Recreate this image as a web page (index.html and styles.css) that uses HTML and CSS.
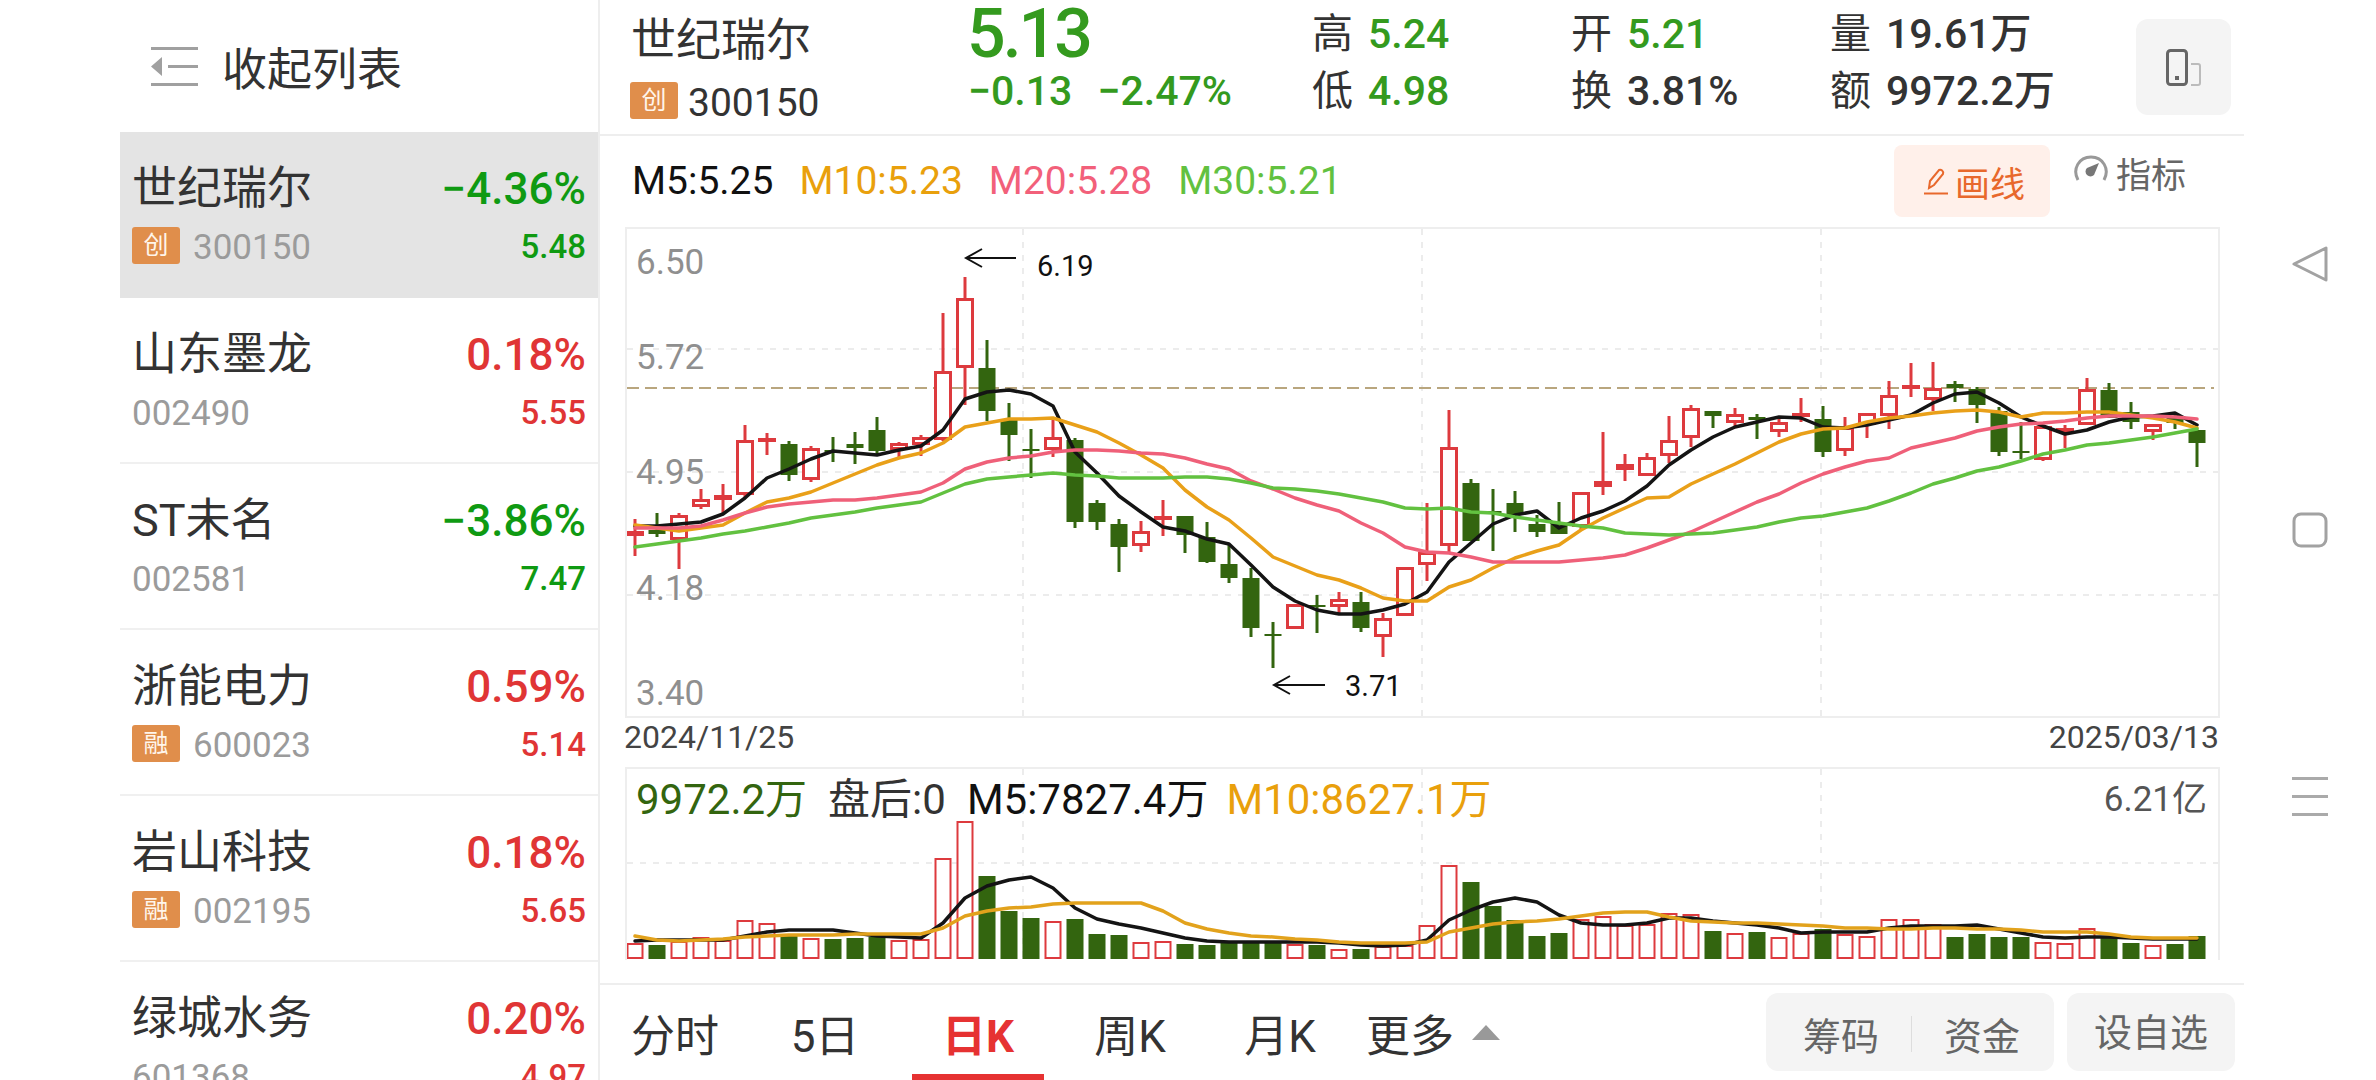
FILE: index.html
```html
<!DOCTYPE html>
<html lang="zh-CN">
<head>
    <meta charset="UTF-8">
    <meta name="viewport" content="width=device-width, initial-scale=1.0">
    <title>世纪瑞尔 日K</title>
    <link rel="stylesheet" href="styles.css">
</head>
<body>
    <div class="app">
        <aside class="sidebar">
            <div class="collapse">
                <svg class="collapse-icon" width="47" height="39" viewBox="0 0 47 39">
                    <path d="M0 0h47v3H0zM17 18h30v3H17zM0 36h47v3H0zM11 10v19L0 19.500z" fill="#a0a0a0"/>
                </svg>
                <span>收起列表</span>
            </div>
            <div class="stock selected">
                <div class="stock-line"><span class="stock-name">世纪瑞尔</span><span class="stock-pct down">−4.36%</span></div>
                <div class="stock-line"><span class="stock-code"><i class="badge">创</i>300150</span><span class="stock-price down">5.48</span></div>
            </div>
            <div class="stock">
                <div class="stock-line"><span class="stock-name">山东墨龙</span><span class="stock-pct up">0.18%</span></div>
                <div class="stock-line"><span class="stock-code">002490</span><span class="stock-price up">5.55</span></div>
            </div>
            <div class="stock">
                <div class="stock-line"><span class="stock-name">ST未名</span><span class="stock-pct down">−3.86%</span></div>
                <div class="stock-line"><span class="stock-code">002581</span><span class="stock-price down">7.47</span></div>
            </div>
            <div class="stock">
                <div class="stock-line"><span class="stock-name">浙能电力</span><span class="stock-pct up">0.59%</span></div>
                <div class="stock-line"><span class="stock-code"><i class="badge">融</i>600023</span><span class="stock-price up">5.14</span></div>
            </div>
            <div class="stock">
                <div class="stock-line"><span class="stock-name">岩山科技</span><span class="stock-pct up">0.18%</span></div>
                <div class="stock-line"><span class="stock-code"><i class="badge">融</i>002195</span><span class="stock-price up">5.65</span></div>
            </div>
            <div class="stock">
                <div class="stock-line"><span class="stock-name">绿城水务</span><span class="stock-pct up">0.20%</span></div>
                <div class="stock-line"><span class="stock-code">601368</span><span class="stock-price up">4.97</span></div>
            </div>
        </aside>

        <main class="main">
            <header class="quote">
                <div class="quote-title">
                    <div class="quote-name">世纪瑞尔</div>
                    <div class="quote-code"><i class="badge">创</i>300150</div>
                </div>
                <div class="quote-price">
                    <div class="price-now">5.13</div>
                    <div class="price-change"><span>−0.13</span><span>−2.47%</span></div>
                </div>
                <div class="stats stats-a">
                    <div class="stat"><b>高</b><span class="green">5.24</span></div>
                    <div class="stat"><b>低</b><span class="green">4.98</span></div>
                </div>
                <div class="stats stats-a">
                    <div class="stat"><b>开</b><span class="green">5.21</span></div>
                    <div class="stat"><b>换</b><span>3.81%</span></div>
                </div>
                <div class="stats stats-b">
                    <div class="stat"><b>量</b><span>19.61万</span></div>
                    <div class="stat"><b>额</b><span>9972.2万</span></div>
                </div>
                <div class="rotate-btn">
                    <svg width="36" height="37" viewBox="0 0 36 37" fill="none">
                        <rect x="1.500" y="1.500" width="19" height="34" rx="3" stroke="#666" stroke-width="3"/>
                        <rect x="9" y="27" width="4" height="4" fill="#666"/>
                        <path d="M25 15h7a2 2 0 0 1 2 2v17a2 2 0 0 1-2 2h-7" stroke="#bbb" stroke-width="2"/>
                    </svg>
                </div>
            </header>

            <div class="tools">
                <span class="ma ma5">M5:5.25</span>
                <span class="ma ma10">M10:5.23</span>
                <span class="ma ma20">M20:5.28</span>
                <span class="ma ma30">M30:5.21</span>
                <div class="draw-btn">
                    <svg width="24" height="27" viewBox="0 0 24 27" fill="none" stroke="#e8682c" stroke-width="2">
                        <path d="M5 20l1-7L15 2c2-1 5 1 4 4L10 17z"/>
                        <path d="M0 25.500h24"/>
                    </svg>
                    <span>画线</span>
                </div>
                <div class="indicator-btn">
                    <svg width="36" height="26" viewBox="0 0 36 26" fill="none">
                        <path d="M5 25C-1 14 6 2 18 2s19 12 13 23" stroke="#999" stroke-width="3"/>
                        <path d="M14 13l12-5-5 12a4 4 0 0 1-7-7z" fill="#777"/>
                    </svg>
                    <span>指标</span>
                </div>
            </div>

            <div class="kline">
                <svg class="kline-svg" id="klineSvg" viewBox="627 229 1591 487">
                    <g id="klineGrid"></g>
                    <path class="last-line" d="M627 388H2214"/>
                    <g id="klineBars"></g>
                    <g id="klineLines"></g>
                    <text class="axis" x="636" y="274">6.50</text>
                    <text class="axis" x="636" y="369">5.72</text>
                    <text class="axis" x="636" y="484">4.95</text>
                    <text class="axis" x="636" y="600">4.18</text>
                    <text class="axis" x="636" y="705">3.40</text>
                    <path class="arrow" d="M1016 258H966M982 249l-16 9 16 9"/>
                    <text class="mark" x="1037" y="276">6.19</text>
                    <path class="arrow" d="M1325 685H1274M1290 676l-16 9 16 9"/>
                    <text class="mark" x="1345" y="696">3.71</text>
                </svg>
            </div>
            <div class="dates"><span>2024/11/25</span><span>2025/03/13</span></div>

            <div class="volume">
                <svg class="volume-svg" id="volumeSvg" viewBox="627 769 1591 191">
                    <g id="volumeGrid"></g>
                    <g id="volumeBars"></g>
                    <g id="volumeLines"></g>
                </svg>
                <div class="volume-legend">
                    <span class="green-dark">9972.2万</span>
                    <span class="text-dark">盘后:0</span>
                    <span class="text-black">M5:7827.4万</span>
                    <span class="text-orange">M10:8627.1万</span>
                    <span class="volume-max">6.21亿</span>
                </div>
            </div>

            <nav class="tabs">
                <div class="tab-list">
                    <div class="tab">分时</div>
                    <div class="tab">5日</div>
                    <div class="tab active">日K</div>
                    <div class="tab">周K</div>
                    <div class="tab">月K</div>
                    <div class="tab">更多</div>
                    <div class="tab"><span class="more-arrow"></span></div>
                </div>
                <div class="action-group">
                    <span>筹码</span><i class="action-sep"></i><span>资金</span>
                </div>
                <div class="action-btn">设自选</div>
            </nav>
        </main>

        <div class="sys-nav">
            <svg width="36" height="36" viewBox="0 0 36 36" fill="none" stroke="#a2a2a2" stroke-width="3" stroke-linejoin="round">
                <path d="M34 2v32L2 18z"/>
            </svg>
            <svg width="36" height="36" viewBox="0 0 36 36" fill="none" stroke="#a2a2a2" stroke-width="3">
                <rect x="2" y="2" width="32" height="32" rx="7"/>
            </svg>
            <div class="sys-menu"><i></i><i></i><i></i></div>
        </div>
    </div>
    <script src="chart.js"></script>
</body>
</html>
```

FILE: styles.css
```css
* { box-sizing: border-box; }
html, body { margin: 0; padding: 0; background: #fff; }
body { font-family: Roboto, "Noto Sans CJK SC", sans-serif; color: #333; }
i { font-style: normal; }
b { font-weight: 400; }

.app { display: flex; width: 2376px; height: 1080px; overflow: hidden; }

/* left list */
.sidebar { width: 480px; margin-left: 120px; height: 1080px; overflow: hidden; border-right: 2px solid #eee; flex: none; }
.collapse { height: 132px; display: flex; align-items: center; padding-left: 31px; font-size: 45px; color: #333; }
.collapse-icon { margin-right: 24px; }
.stock { height: 166px; padding: 33px 12px 0 12px; border-bottom: 2px solid #f0f0f0; }
.stock.selected { background: #e4e4e4; border-bottom: 0; }
.stock-line { display: flex; justify-content: space-between; align-items: center; }
.stock-line + .stock-line { margin-top: 14px; height: 37px; }
.stock-name { font-size: 45px; line-height: 48px; }
.stock-pct { font-size: 44px; line-height: 48px; font-weight: 500; }
.stock-code { display: flex; align-items: flex-start; height: 37px; font-size: 35px; line-height: 41px; color: #9b9b9b; }
.stock-price { font-size: 33px; line-height: 37px; padding-top: 2px; font-weight: 500; }
.up { color: #e03535; }
.down { color: #0f9a12; }

.badge { display: inline-flex; align-items: center; justify-content: center; width: 48px; height: 37px; margin-right: 13px; background: #e08e4b; border-radius: 3px; color: #fff5ea; font-size: 25px; line-height: 37px; }

/* main column */
.main { width: 1644px; flex: none; }
.quote { display: flex; height: 136px; padding-left: 30px; border-bottom: 2px solid #eee; }
.quote-title { width: 338px; padding-top: 19px; }
.quote-name { font-size: 45px; line-height: 44px; padding-left: 1px; }
.quote-code { display: flex; align-items: flex-start; height: 37px; margin-top: 19px; font-size: 39px; line-height: 42px; }
.quote-code .badge { margin-right: 10px; }
.quote-price { width: 344px; color: #349a1e; }
.price-now { font-size: 68px; line-height: 68px; font-weight: 500; letter-spacing: -3px; margin-left: -1px; }
.price-change { display: flex; gap: 25px; font-size: 41px; line-height: 42px; margin-top: 2px; font-weight: 500; }
.stats { padding-top: 6px; }
.stats-a { width: 259px; }
.stats-b { width: 306px; }
.stat { display: flex; font-size: 41px; line-height: 56px; height: 57px; }
.stat b { margin-right: 15px; }
.stat span { font-weight: 500; }
.green { color: #349a1e; }
.rotate-btn { width: 95px; height: 96px; margin-top: 19px; background: #f4f4f4; border-radius: 12px; padding: 30px 0 0 30px; }

.tools { display: flex; height: 91px; padding: 0 58px 0 32px; }
.ma { font-size: 39px; line-height: 91px; margin-right: 26px; }
.ma5 { color: #111; }
.ma10 { color: #e9a00c; }
.ma20 { color: #f2607a; }
.ma30 { color: #62c140; }
.draw-btn { display: flex; align-items: center; width: 156px; height: 72px; margin: 9px 23px 0 auto; padding-left: 30px; background: #fff0ea; border-radius: 8px; color: #e8682c; font-size: 35px; }
.draw-btn span { margin-left: 7px; }
.indicator-btn { display: flex; align-items: center; height: 36px; margin-top: 18px; color: #666; font-size: 35px; }
.indicator-btn svg { margin: -8px 7px 0 0; }

.kline { width: 1595px; height: 491px; margin-left: 25px; border: 2px solid #eee; }
.kline-svg { display: block; width: 1591px; height: 487px; }
.axis { font-size: 35px; fill: #8f8f8f; }
.mark { font-size: 29px; fill: #111; }
.arrow { fill: none; stroke: #111; stroke-width: 2; }
.last-line { fill: none; stroke: #b9a67e; stroke-width: 2; stroke-dasharray: 12 6; }

.dates { display: flex; justify-content: space-between; width: 1595px; height: 49px; margin-left: 24px; font-size: 32px; line-height: 39px; color: #444; }

.volume { position: relative; width: 1595px; height: 193px; margin-left: 25px; border: 2px solid #eee; border-bottom: 0; }
.volume-svg { display: block; width: 1591px; height: 191px; }
.volume-legend { position: absolute; left: 0; right: 0; top: 0; display: flex; gap: 21px; padding: 0 11px 0 9px; font-size: 42px; line-height: 62px; }
.green-dark { color: #33650f; }
.text-dark { color: #333; }
.text-black { color: #111; }
.text-orange { margin-left: -3px; color: #e9a00c; }
.volume-max { margin-left: auto; font-size: 35px; color: #555; }

.tabs { display: flex; height: 97px; margin-top: 23px; padding-right: 9px; border-top: 2px solid #eee; }
.tab-list { display: grid; grid-template-columns: 150px 150px 156px 148px 152px 108px 44px; height: 95px; }
.tab { display: flex; align-items: center; justify-content: center; font-size: 44px; color: #333; }
.tab.active { margin: 0 12px; font-weight: 700; color: #e63232; box-shadow: inset 0 -6px 0 #e63232; }
.more-arrow { width: 0; height: 0; border-left: 14px solid transparent; border-right: 14px solid transparent; border-bottom: 15px solid #999; }
.action-group { display: flex; align-items: center; gap: 32px; width: 288px; height: 78px; margin: 8px 0 0 auto; padding: 3px 0 0 37px; background: #f4f4f4; border-radius: 12px; font-size: 38px; color: #666; }
.action-sep { width: 1px; height: 36px; background: #ddd; }
.action-btn { width: 168px; height: 78px; margin: 8px 0 0 13px; background: #f4f4f4; border-radius: 12px; font-size: 38px; line-height: 81px; text-align: center; color: #666; }

/* android nav bar on the right */
.sys-nav { flex: 1; display: flex; flex-direction: column; align-items: center; justify-content: space-between; padding: 246px 0 264px; }
.sys-menu { display: flex; flex-direction: column; gap: 15px; width: 36px; }
.sys-menu i { display: block; height: 3px; background: #aaa; }
```

FILE: chart.js
```js
// all y values below are page pixels, read off the screenshot
const firstX = 635;
const stepX = 22;
const RED = '#dd3a3e';
const GREEN = '#33650f';

// [colour, body top, body bottom, wick top, wick bottom]
const candles = [
    ['r',531,536,519,556], ['g',530,534,513,537], ['r',515,540,513,569], ['r',499,507,489,509],
    ['r',495,500,484,515], ['r',440,495,425,497], ['r',438,442,433,455], ['g',444,475,441,481],
    ['r',448,480,446,482], ['g',450,452,437,462], ['g',444,448,432,464], ['g',430,451,417,455],
    ['r',443,450,442,457], ['r',437,445,435,456], ['r',371,440,313,441], ['r',298,368,277,405],
    ['g',368,411,340,421], ['g',419,435,403,461], ['g',449,451,429,478], ['r',437,450,417,457],
    ['g',440,522,438,528], ['g',503,522,500,530], ['g',524,547,519,572], ['r',531,546,521,552],
    ['r',516,520,500,536], ['g',516,535,516,553], ['g',537,562,522,563], ['g',564,578,545,583],
    ['g',578,628,568,637], ['g',634,636,622,668], ['r',604,629,604,629], ['g',605,607,595,633],
    ['r',599,607,592,613], ['g',602,628,592,632], ['r',618,637,613,657], ['r',567,616,567,616],
    ['r',552,565,503,581], ['r',447,546,410,552], ['g',483,541,479,541], ['g',511,513,489,551],
    ['g',503,515,491,532], ['g',524,532,515,537], ['g',523,534,502,534], ['r',492,527,492,529],
    ['r',481,487,432,495], ['r',464,470,454,481], ['r',457,476,453,476], ['r',440,456,416,463],
    ['r',408,438,405,447], ['g',411,416,411,428], ['r',414,423,408,426], ['g',417,420,414,439],
    ['r',422,432,417,437], ['r',413,417,398,422], ['g',419,452,406,457], ['r',427,451,417,456],
    ['r',413,425,413,438], ['r',395,416,381,429], ['r',385,389,363,397], ['r',388,400,362,411],
    ['g',384,388,381,402], ['g',389,405,387,423], ['g',411,452,407,456], ['g',451,453,422,459],
    ['r',426,460,426,461], ['r',428,432,425,448], ['r',389,425,378,425], ['g',390,418,383,418],
    ['g',412,422,402,429], ['r',424,432,424,440], ['g',417,423,415,429], ['g',430,443,430,467]
];

const ma5 = [526,526,524,522,514,498,478,469,459,451,453,455,450,446,430,399,392,390,394,406,
    452,473,496,512,527,531,539,544,565,587,601,610,614,614,610,604,592,562,543,524,515,511,528,518,
    511,501,486,465,450,437,427,422,417,418,427,428,425,420,415,403,394,392,403,417,426,434,430,422,417,416,413,425];
const ma10 = [525,528,531,528,525,513,502,498,492,483,474,465,458,453,443,427,423,419,419,418,
    425,432,443,455,468,490,507,520,538,557,566,575,580,588,598,601,601,587,580,568,558,551,545,530,
    518,508,498,497,484,474,464,453,442,434,429,428,422,418,416,413,411,410,412,417,413,413,412,412,415,418,422,428];
const ma20 = [528,528,528,526,520,513,507,504,502,500,500,498,495,492,483,469,462,458,456,452,
    450,450,451,453,454,458,464,469,481,489,498,505,511,523,533,547,552,553,557,562,562,562,562,560,
    558,555,548,540,532,522,512,502,494,483,474,467,461,458,448,443,438,431,427,424,423,421,418,416,416,416,417,419];
const ma30 = [547,544,541,538,534,531,527,523,518,515,512,508,505,502,493,484,479,477,475,473,
    475,476,478,478,478,477,477,479,483,488,489,491,494,498,502,508,509,508,512,513,517,520,523,526,
    528,533,534,535,534,533,530,527,522,518,516,512,508,501,493,484,478,471,467,461,454,450,445,443,440,437,433,429];

const volTops = [943,945,941,937,940,920,923,936,938,939,938,937,940,939,858,821,876,911,918,921,
    919,934,935,942,941,944,945,943,942,942,944,945,949,949,946,945,925,865,882,906,920,936,933,919,
    916,925,924,913,914,931,933,932,937,933,929,934,936,919,919,924,937,934,937,937,942,943,928,937,943,945,944,936];
const volMa5 = [941,940,940,940,940,936,932,930,930,930,933,936,937,938,923,898,886,880,877,888,
    908,919,924,928,933,938,941,942,942,942,942,942,943,945,946,945,940,920,910,902,898,902,915,923,
    925,925,923,918,918,921,923,925,928,933,932,932,932,928,926,926,926,925,929,933,937,938,937,937,938,939,939,939];
const volMa10 = [936,940,941,940,939,937,936,935,935,935,934,934,934,934,928,916,911,908,907,904,
    903,903,903,903,911,923,929,933,936,937,939,940,942,943,943,943,942,932,928,924,922,921,919,916,
    913,912,912,917,921,922,923,923,924,925,926,928,928,929,929,928,928,929,929,930,932,932,932,934,937,938,938,938];

const svgNs = 'http://www.w3.org/2000/svg';

function add(parent, tag, attrs) {
    const el = document.createElementNS(svgNs, tag);
    for (const key in attrs) el.setAttribute(key, attrs[key]);
    parent.appendChild(el);
    return el;
}

function centerX(i) {
    return firstX + stepX * i;
}

function drawGrid(group, rows, top, bottom) {
    const attrs = { fill: 'none', stroke: '#ececec', 'stroke-width': 2, 'stroke-dasharray': '6 7' };
    rows.forEach(y => add(group, 'path', { ...attrs, d: `M627 ${y}H2218` }));
    [1023, 1422, 1821].forEach(x => add(group, 'path', { ...attrs, d: `M${x} ${top}V${bottom}` }));
}

function drawLine(group, values, color) {
    const points = values.map((y, i) => `${centerX(i)},${y}`).join(' ');
    add(group, 'polyline', {
        points, fill: 'none', stroke: color, 'stroke-width': 3.5,
        'stroke-linejoin': 'round', 'stroke-linecap': 'round'
    });
}

function drawCandles(group) {
    candles.forEach((c, i) => {
        const x = centerX(i);
        const color = c[0] === 'r' ? RED : GREEN;
        add(group, 'path', { d: `M${x} ${c[3]}V${c[4]}`, stroke: color, 'stroke-width': 3 });
        const height = c[2] - c[1];
        if (c[0] === 'g' || height <= 5) {
            const half = c[0] === 'g' ? 8.5 : 9;
            add(group, 'rect', { x: x - half, y: c[1], width: half * 2, height, fill: color });
        } else {
            add(group, 'rect', {
                x: x - 7.5, y: c[1] + 1.5, width: 15, height: height - 3,
                fill: '#fff', stroke: color, 'stroke-width': 3
            });
        }
    });
}

function drawVolume(group) {
    volTops.forEach((top, i) => {
        const x = centerX(i);
        if (candles[i][0] === 'g') {
            add(group, 'rect', { x: x - 8.5, y: top, width: 17, height: 959 - top, fill: GREEN });
        } else {
            add(group, 'rect', {
                x: x - 7.5, y: top + 1, width: 15, height: 957 - top,
                fill: '#fff', stroke: RED, 'stroke-width': 2
            });
        }
    });
}

drawGrid(document.getElementById('klineGrid'), [349, 472, 595], 229, 716);
drawCandles(document.getElementById('klineBars'));
const klineLines = document.getElementById('klineLines');
drawLine(klineLines, ma5, '#141414');
drawLine(klineLines, ma10, '#e9a019');
drawLine(klineLines, ma20, '#ef6079');
drawLine(klineLines, ma30, '#62c140');

drawGrid(document.getElementById('volumeGrid'), [863], 769, 959);
drawVolume(document.getElementById('volumeBars'));
const volumeLines = document.getElementById('volumeLines');
drawLine(volumeLines, volMa5, '#141414');
drawLine(volumeLines, volMa10, '#e2a21c');
```
